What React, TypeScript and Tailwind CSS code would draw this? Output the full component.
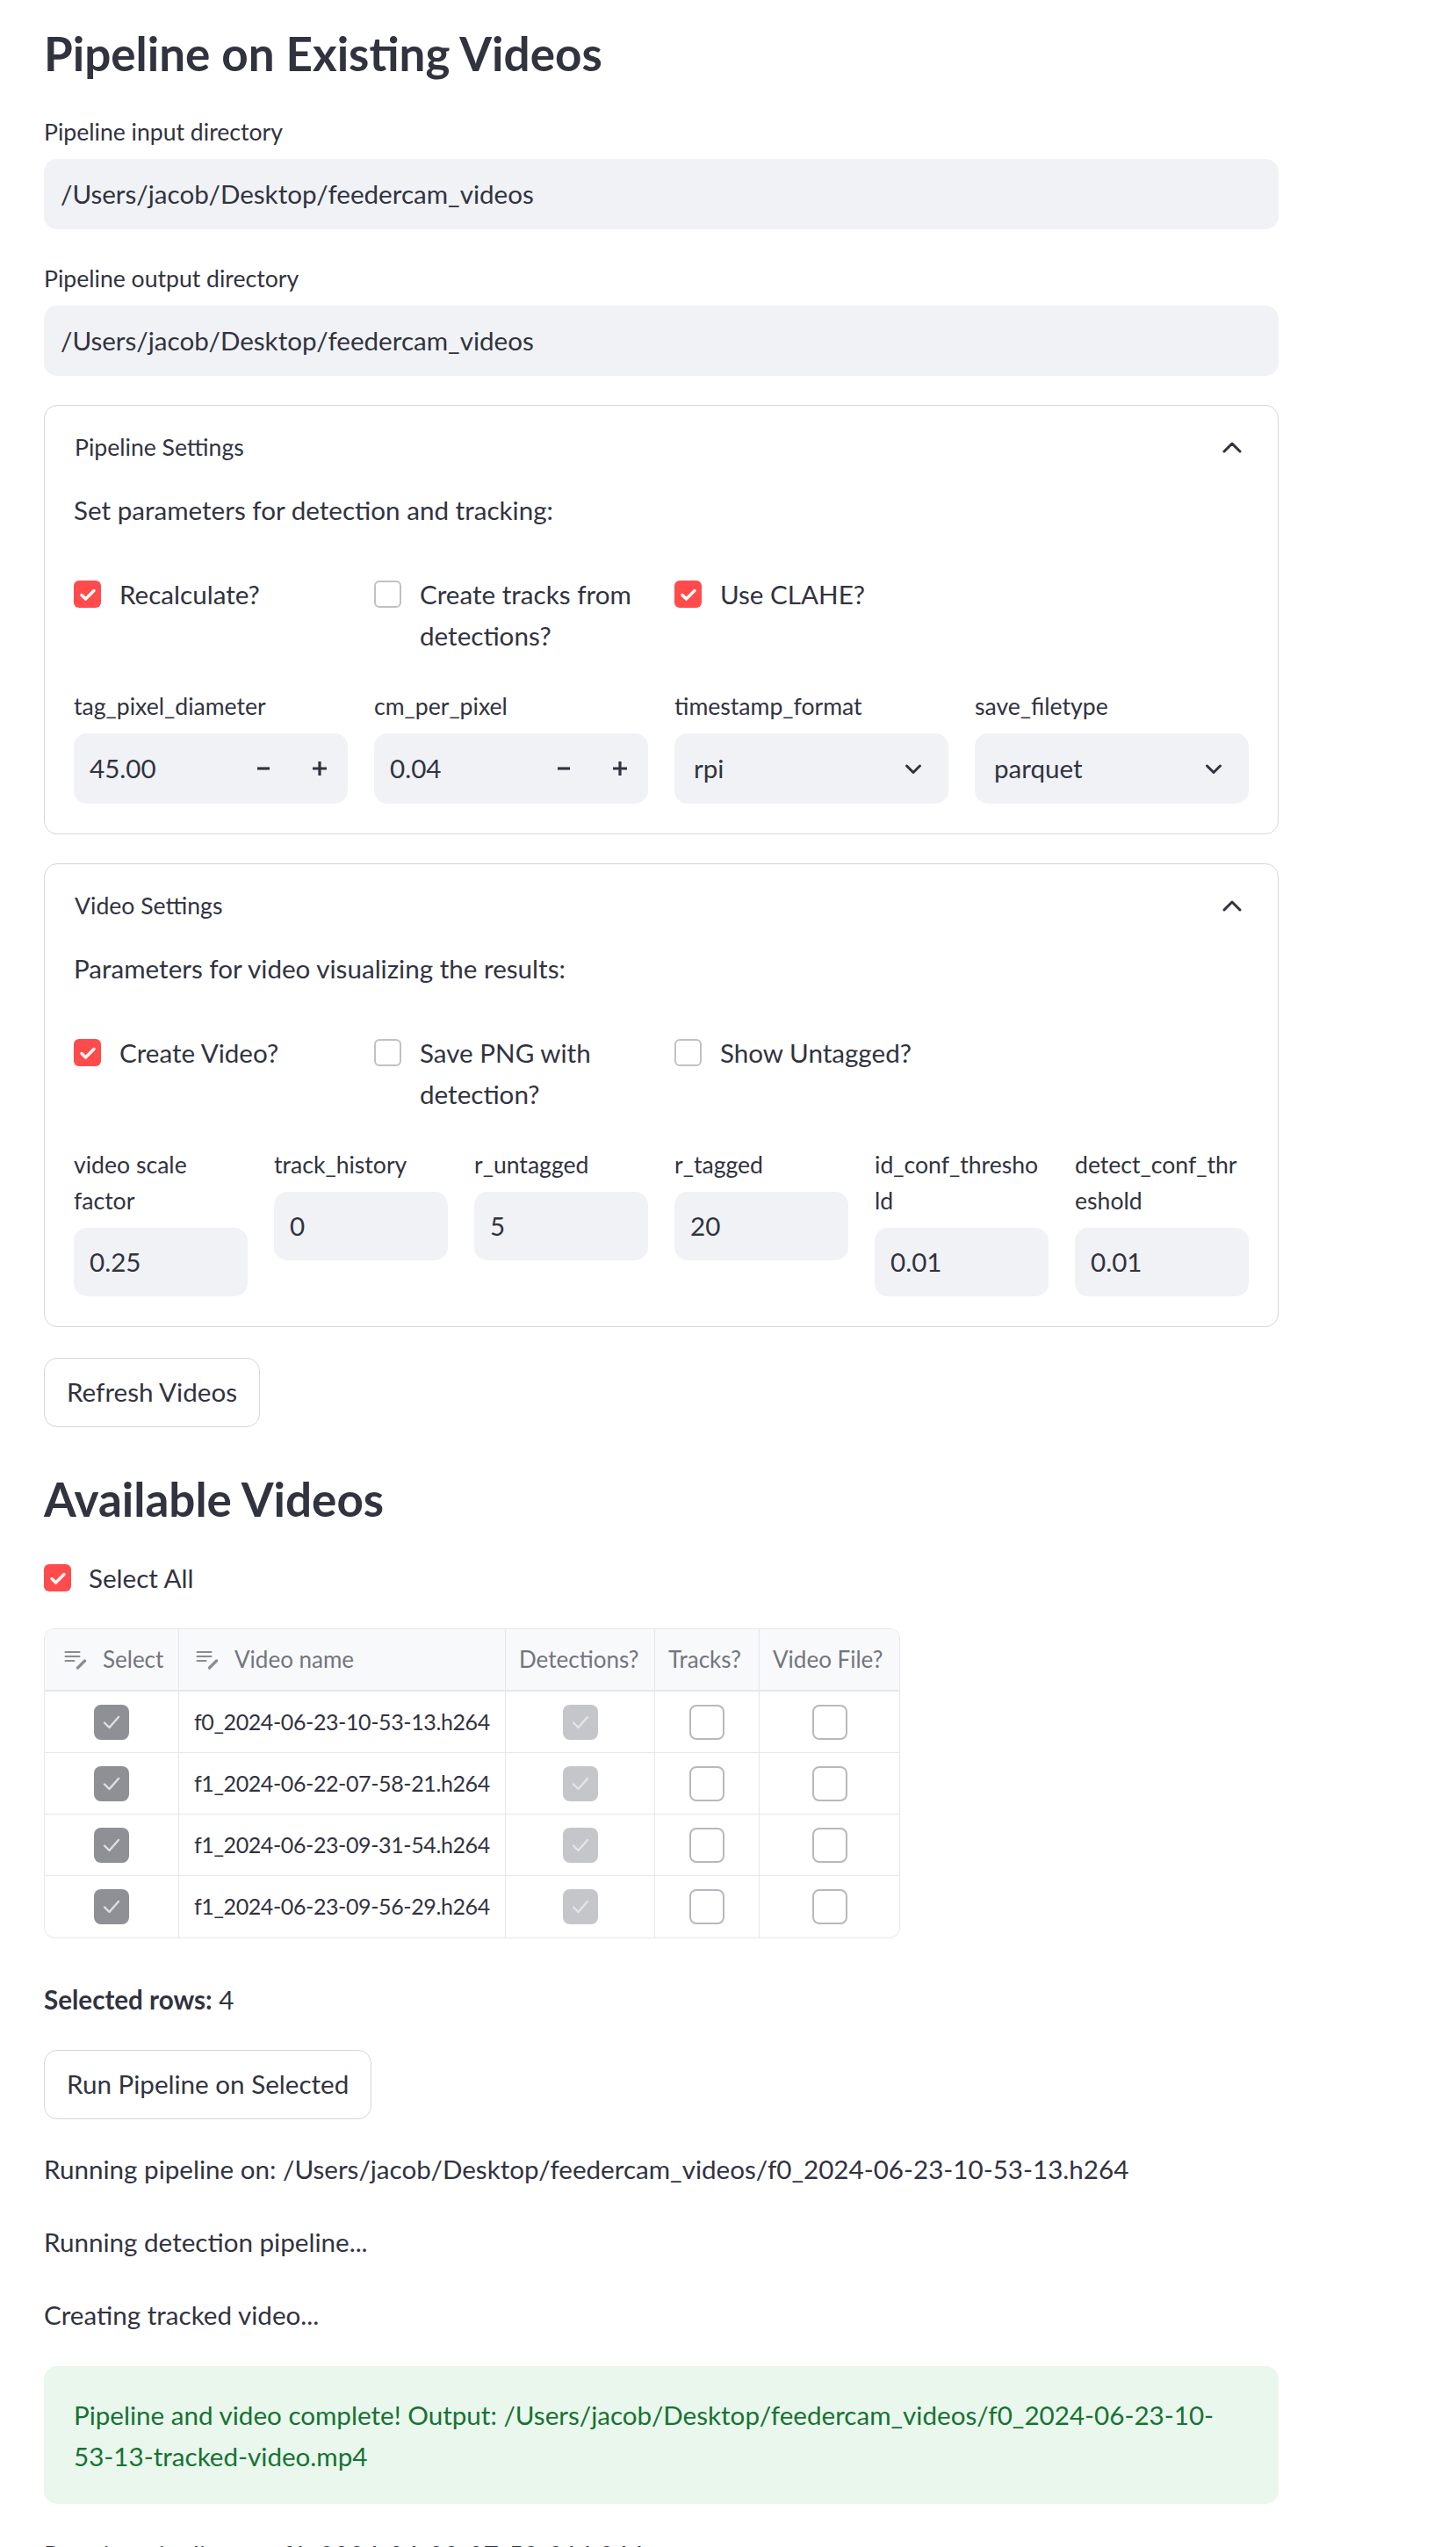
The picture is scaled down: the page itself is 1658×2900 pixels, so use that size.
import React from 'react';

// Streamlit-ish page rendered at ~1.85x

const Check = ({ on }: { on: boolean }) =>
  on ? (
    <span className="flex h-[31px] w-[31px] shrink-0 items-center justify-center rounded-[6px] bg-[#ff4b4b]">
      <svg width="20" height="16" viewBox="0 0 20 16">
        <path d="M3 8.5l4.5 4.5L17 3.5" fill="none" stroke="#fff" strokeWidth="3.4" strokeLinecap="round" strokeLinejoin="round" />
      </svg>
    </span>
  ) : (
    <span className="h-[31px] w-[31px] shrink-0 rounded-[6px] border-2 border-[#bfc1c7] bg-white" />
  );

const CheckField = ({ on, children }: { on: boolean; children: React.ReactNode }) => (
  <div className="flex items-start gap-[21px]">
    <div className="flex h-[47px] items-center">
      <Check on={on} />
    </div>
    <span className="text-[29.6px] leading-[47px]">{children}</span>
  </div>
);

const Label = ({ children }: { children: React.ReactNode }) => (
  <div className="mb-[10px] text-[26.6px] leading-[41px]">{children}</div>
);

const TextField = ({ label, value, className }: { label: string; value: string; className?: string }) => (
  <div className={className}>
    <Label>{label}</Label>
    <div className="flex h-[80px] items-center rounded-[15px] bg-[#f0f2f6] px-[19px] text-[29.6px]">{value}</div>
  </div>
);

const NumberInput = ({ label, value }: { label: React.ReactNode; value: string }) => (
  <div>
    <Label>{label}</Label>
    <div className="flex h-[80px] items-center rounded-[15px] bg-[#f0f2f6] text-[29.6px]">
      <span className="flex-1 pl-[18px]">{value}</span>
      <span className="flex w-[64px] justify-center">
        <svg width="16" height="16" viewBox="0 0 16 16">
          <path d="M1 8h14" stroke="#31333f" strokeWidth="3.2" />
        </svg>
      </span>
      <span className="flex w-[64px] justify-center">
        <svg width="18" height="18" viewBox="0 0 18 18">
          <path d="M1 9h16M9 1v16" stroke="#31333f" strokeWidth="3.2" />
        </svg>
      </span>
    </div>
  </div>
);

const SelectBox = ({ label, value }: { label: string; value: string }) => (
  <div>
    <Label>{label}</Label>
    <div className="flex h-[80px] items-center justify-between rounded-[15px] bg-[#f0f2f6] pl-[22px] pr-[30px] text-[29.6px]">
      <span>{value}</span>
      <svg width="20" height="13" viewBox="0 0 20 13">
        <path d="M2.5 3l7.5 7.5L17.5 3" fill="none" stroke="#31333f" strokeWidth="3" strokeLinecap="round" strokeLinejoin="round" />
      </svg>
    </div>
  </div>
);

const PlainInput = ({ label, value }: { label: React.ReactNode; value: string }) => (
  <div>
    <Label>{label}</Label>
    <div className="flex h-[78px] items-center rounded-[15px] bg-[#f0f2f6] pl-[18px] text-[29.6px]">{value}</div>
  </div>
);

const Expander = ({ title, children, className }: { title: string; children: React.ReactNode; className?: string }) => (
  <div className={`rounded-[15px] border border-[#d6d6d9] ${className ?? ''}`}>
    <div className="flex h-[95px] items-center justify-between pl-[34px] pr-[40px]">
      <span className="text-[26.6px]">{title}</span>
      <svg width="24" height="15" viewBox="0 0 24 15">
        <path d="M3 12l9-9 9 9" fill="none" stroke="#31333f" strokeWidth="3" strokeLinecap="round" strokeLinejoin="round" />
      </svg>
    </div>
    <div className="px-[33px] pb-[34px]">{children}</div>
  </div>
);

const Button = ({ children, className }: { children: React.ReactNode; className?: string }) => (
  <div className={`flex h-[79px] w-fit items-center rounded-[15px] border border-[#d6d6d9] bg-white px-[25px] text-[29.6px] ${className ?? ''}`}>
    {children}
  </div>
);

const EditIcon = () => (
  <svg width="28" height="22" viewBox="0 0 28 22" fill="none" stroke="#8a8c94" strokeLinecap="round">
    <path d="M1.5 2h16M1.5 7h16M1.5 12h10" strokeWidth="2" />
    <path d="M15.5 20l8-8" strokeWidth="3.2" />
  </svg>
);

const CellCheck = ({ state }: { state: 'dark' | 'light' | 'off' }) => {
  if (state === 'off') return <span className="h-[40px] w-[40px] rounded-[8px] border-2 border-[#b7b9be] bg-white" />;
  return (
    <span className={`flex h-[40px] w-[40px] items-center justify-center rounded-[8px] ${state === 'dark' ? 'bg-[#8f9096]' : 'bg-[#c5c6ca]'}`}>
      <svg width="24" height="20" viewBox="0 0 24 20">
        <path d="M4 10.5l5.5 5.5L20 4" fill="none" stroke={state === 'dark' ? '#dedfe2' : '#e4e5e8'} strokeWidth="2.4" strokeLinecap="round" strokeLinejoin="round" />
      </svg>
    </span>
  );
};

const videos = [
  'f0_2024-06-23-10-53-13.h264',
  'f1_2024-06-22-07-58-21.h264',
  'f1_2024-06-23-09-31-54.h264',
  'f1_2024-06-23-09-56-29.h264',
];

const cols = 'grid grid-cols-[153px_372px_170px_119px_159px]';

export default function App() {
  return (
    <div className="min-h-screen bg-white font-['Lato',sans-serif] text-[#31333f]">
      <div className="flex w-[1456px] flex-col pl-[50px] pt-[25px]">
        <h1 className="text-[53px] font-bold leading-[72px]">Pipeline on Existing Videos</h1>

        <TextField className="mt-[33px]" label="Pipeline input directory" value="/Users/jacob/Desktop/feedercam_videos" />
        <TextField className="mt-[36px]" label="Pipeline output directory" value="/Users/jacob/Desktop/feedercam_videos" />

        <Expander className="mt-[33px]" title="Pipeline Settings">
          <p className="text-[29.6px] leading-[47px]">Set parameters for detection and tracking:</p>
          <div className="mt-[49px] grid grid-cols-4 gap-x-[30px]">
            <CheckField on>Recalculate?</CheckField>
            <CheckField on={false}>
              Create tracks from
              <br />
              detections?
            </CheckField>
            <CheckField on>Use CLAHE?</CheckField>
          </div>
          <div className="mt-[37px] grid grid-cols-4 gap-x-[30px]">
            <NumberInput label="tag_pixel_diameter" value="45.00" />
            <NumberInput label="cm_per_pixel" value="0.04" />
            <SelectBox label="timestamp_format" value="rpi" />
            <SelectBox label="save_filetype" value="parquet" />
          </div>
        </Expander>

        <Expander className="mt-[33px]" title="Video Settings">
          <p className="text-[29.6px] leading-[47px]">Parameters for video visualizing the results:</p>
          <div className="mt-[49px] grid grid-cols-4 gap-x-[30px]">
            <CheckField on>Create Video?</CheckField>
            <CheckField on={false}>
              Save PNG with
              <br />
              detection?
            </CheckField>
            <CheckField on={false}>Show Untagged?</CheckField>
          </div>
          <div className="mt-[37px] grid grid-cols-6 gap-x-[30px]">
            <PlainInput
              label={
                <>
                  video scale
                  <br />
                  factor
                </>
              }
              value="0.25"
            />
            <PlainInput label="track_history" value="0" />
            <PlainInput label="r_untagged" value="5" />
            <PlainInput label="r_tagged" value="20" />
            <PlainInput
              label={
                <>
                  id_conf_thresho
                  <br />
                  ld
                </>
              }
              value="0.01"
            />
            <PlainInput
              label={
                <>
                  detect_conf_thr
                  <br />
                  eshold
                </>
              }
              value="0.01"
            />
          </div>
        </Expander>

        <Button className="mt-[35px]">Refresh Videos</Button>

        <h2 className="mt-[46px] text-[53px] font-bold leading-[72px]">Available Videos</h2>

        <div className="mt-[30px] flex items-center gap-[20px]">
          <Check on />
          <span className="text-[29.6px] leading-[47px]">Select All</span>
        </div>

        <div className="mt-[34px] w-[975px] overflow-hidden rounded-[12px] border border-[#e6e7ea] text-[26px]">
          <div className={`${cols} h-[71px] border-b-2 border-[#e6e7ea] bg-[#f8f9fb] text-[#73757e]`}>
            <div className="flex items-center gap-[16px] border-r border-[#e6e7ea] pl-[22px]">
              <EditIcon />
              Select
            </div>
            <div className="flex items-center gap-[16px] border-r border-[#e6e7ea] pl-[19px]">
              <EditIcon />
              Video name
            </div>
            <div className="flex items-center border-r border-[#e6e7ea] pl-[15px]">Detections?</div>
            <div className="flex items-center border-r border-[#e6e7ea] pl-[15px]">Tracks?</div>
            <div className="flex items-center pl-[15px]">Video File?</div>
          </div>
          {videos.map((v, i) => (
            <div key={v} className={`${cols} h-[70px] ${i < videos.length - 1 ? 'border-b border-[#e6e7ea]' : ''}`}>
              <div className="flex items-center justify-center border-r border-[#e6e7ea]">
                <CellCheck state="dark" />
              </div>
              <div className="flex items-center whitespace-nowrap border-r border-[#e6e7ea] pl-[17px] text-[25px] tracking-[-0.4px]">
                {v}
              </div>
              <div className="flex items-center justify-center border-r border-[#e6e7ea]">
                <CellCheck state="light" />
              </div>
              <div className="flex items-center justify-center border-r border-[#e6e7ea]">
                <CellCheck state="off" />
              </div>
              <div className="flex items-center justify-center">
                <CellCheck state="off" />
              </div>
            </div>
          ))}
        </div>

        <p className="mt-[46px] text-[29.6px] leading-[47px]">
          <span className="font-bold">Selected rows:</span> 4
        </p>

        <Button className="mt-[34px]">Run Pipeline on Selected</Button>

        <p className="mt-[33px] text-[29.6px] leading-[47px]">
          Running pipeline on: /Users/jacob/Desktop/feedercam_videos/f0_2024-06-23-10-53-13.h264
        </p>
        <p className="mt-[36px] text-[29.6px] leading-[47px]">Running detection pipeline...</p>
        <p className="mt-[36px] text-[29.6px] leading-[47px]">Creating tracked video...</p>

        <div className="mt-[35px] rounded-[15px] bg-[#e9f7ed] px-[34px] pb-[30px] pt-[32px] text-[29.6px] leading-[47.4px] text-[#177233]">
          <span className="block">Pipeline and video complete! Output: /Users/jacob/Desktop/feedercam_videos/f0_2024-06-23-10-</span>
          <span className="block">53-13-tracked-video.mp4</span>
        </div>

        <p className="mt-[34px] text-[29.6px] leading-[47px]">Running pipeline on: f1_2024-06-22-07-58-21.h264</p>
      </div>
    </div>
  );
}
